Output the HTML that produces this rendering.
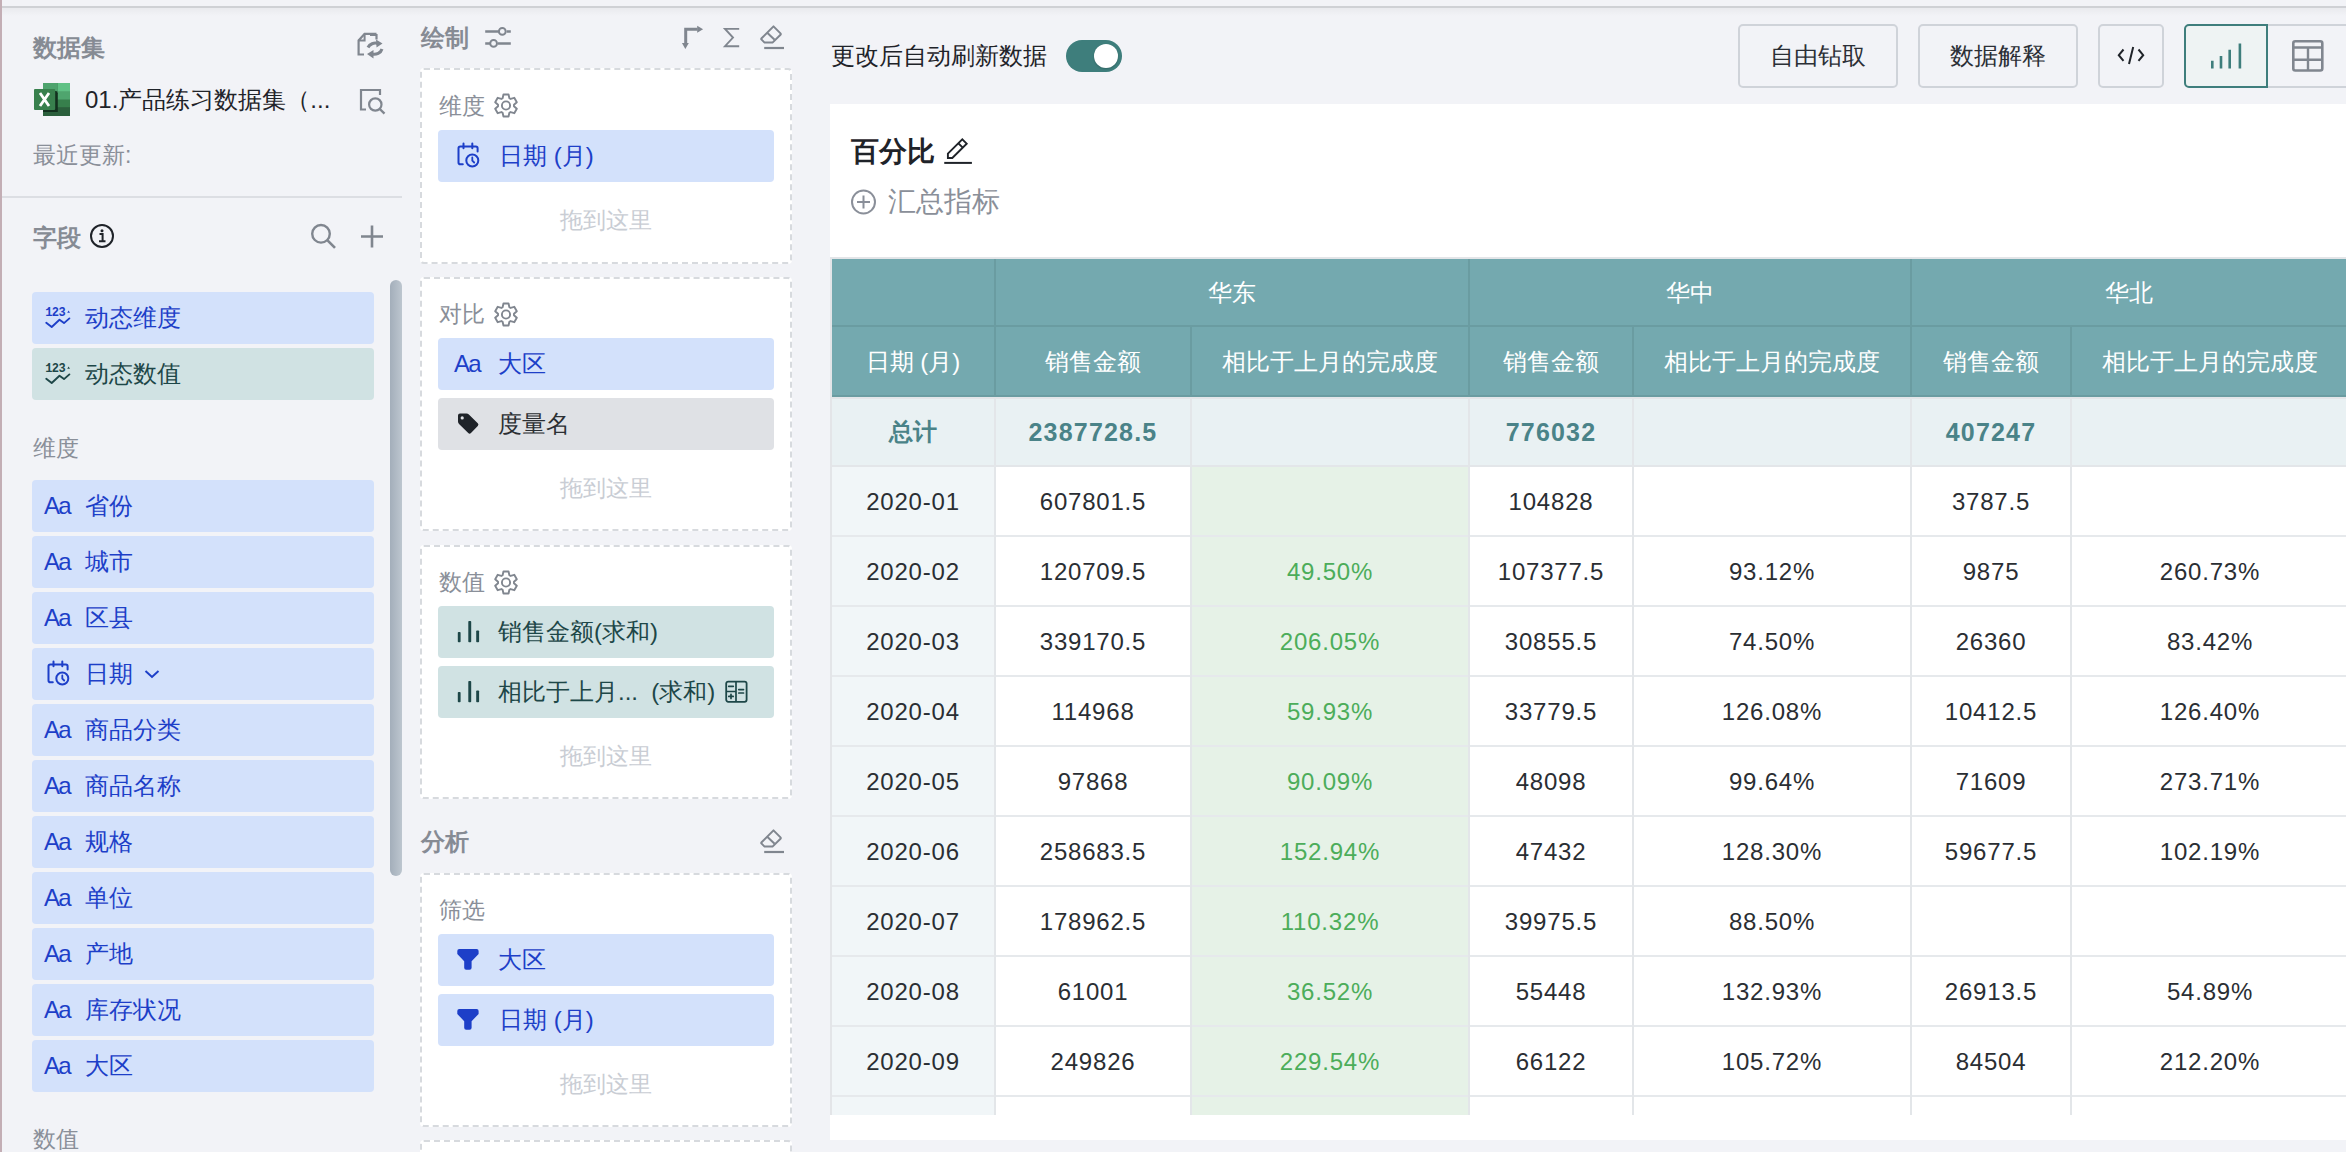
<!DOCTYPE html>
<html><head><meta charset="utf-8"><style>
html,body{margin:0;padding:0;width:2346px;height:1152px;overflow:hidden;background:#f2f3f7;}
body{position:relative;font-family:"Liberation Sans", sans-serif;}
.t{position:absolute;white-space:nowrap;}
.r{position:absolute;}
.dbox{box-sizing:border-box;background:#fff;border:2px dashed #d7dade;border-radius:4px;}
</style></head><body>
<div class="r" style="left:0px;top:0px;width:2346px;height:1152px;background:#f2f3f7;"></div>
<div class="r" style="left:0px;top:0px;width:2px;height:1152px;background:#c3aeb5;"></div>
<div class="r" style="left:2px;top:6px;width:2344px;height:2px;background:#cfd1d5;"></div>
<div class="r" style="left:2px;top:8px;width:2344px;height:8px;background:linear-gradient(rgba(0,0,0,0.035),rgba(0,0,0,0));"></div>
<div class="t " style="left:33px;top:31.200000000000003px;font-size:24px;line-height:33.599999999999994px;color:#868b94;font-weight:bold;">数据集</div>
<svg class="r" style="left:354px;top:30px;" width="32" height="34" viewBox="0 0 32 34" fill="none"><path d="M16 5 H22.5 V9.5 M10 24.5 H4.6 V10.5 L10.6 3.8 H22.5" stroke="#80868f" stroke-width="2.2" fill="none"/><path d="M4.6 10.5 H10.6 V3.8" stroke="#80868f" stroke-width="2" fill="none"/><path d="M14 17.5 A8 7 0 0 1 24 13.5" stroke="#80868f" stroke-width="3" fill="none"/><path d="M22 9.5 L28.5 13.5 L22.5 17.5 Z" fill="#80868f"/><path d="M28 19 A8 7 0 0 1 18 24" stroke="#80868f" stroke-width="3" fill="none"/><path d="M19.5 20 L13 24 L19.5 28.5 Z" fill="#80868f"/></svg>
<svg class="r" style="left:33px;top:82px;" width="38" height="35" viewBox="0 0 38 35" fill="none"><rect x="10" y="1" width="27" height="33" fill="#2b5f3c"/><rect x="10" y="1" width="14.8" height="8.8" fill="#4ea36d"/><rect x="24.8" y="1" width="12.2" height="8.8" fill="#60c185"/><rect x="10" y="9.8" width="27" height="8" fill="#4fa56e"/><rect x="10" y="17.8" width="27" height="7.4" fill="#377f4c"/><path d="M10 9 H22.6 Q24.8 9 24.8 11.2 V30 H10 Z" fill="#12301e"/><rect x="1" y="7" width="21.2" height="21" rx="1" fill="#38804d"/><path d="M7 11 L16 24 M16 11 L7 24" stroke="#fff" stroke-width="2.8"/></svg>
<div class="t " style="left:85px;top:83.2px;font-size:24px;line-height:33.599999999999994px;color:#1f2329;font-weight:normal;">01.产品练习数据集（...</div>
<svg class="r" style="left:356px;top:85px;" width="32" height="32" viewBox="0 0 32 32" fill="none"><path d="M10 24.5 H5 V5 H24 V10" stroke="#80868f" stroke-width="2.2" fill="none"/><circle cx="19.3" cy="19.5" r="6.2" stroke="#80868f" stroke-width="2.2"/><path d="M23.8 24 L28.5 28.6" stroke="#80868f" stroke-width="2.4"/></svg>
<div class="t " style="left:33px;top:138.9px;font-size:23px;line-height:32.199999999999996px;color:#8a8f99;font-weight:normal;">最近更新:</div>
<div class="r" style="left:2px;top:196px;width:400px;height:2px;background:#dcdee3;"></div>
<div class="t " style="left:33px;top:221.2px;font-size:24px;line-height:33.599999999999994px;color:#868b94;font-weight:bold;">字段</div>
<svg class="r" style="left:88px;top:222px;" width="28" height="28" viewBox="0 0 28 28" fill="none"><circle cx="14" cy="14" r="11" stroke="#1f2329" stroke-width="2"/><circle cx="14" cy="8.8" r="1.5" fill="#1f2329"/><path d="M11.5 12 H14.6 V19 M11 19.3 H17.5" stroke="#1f2329" stroke-width="2"/></svg>
<svg class="r" style="left:306px;top:218px;" width="34" height="34" viewBox="0 0 34 34" fill="none"><circle cx="15" cy="15.8" r="8.8" stroke="#80868f" stroke-width="2.4"/><path d="M21.5 22.3 L29 29.8" stroke="#80868f" stroke-width="2.6"/></svg>
<svg class="r" style="left:356px;top:220px;" width="32" height="32" viewBox="0 0 32 32" fill="none"><path d="M16 5.4 V27.5 M5 16.5 H27" stroke="#80868f" stroke-width="2.6"/></svg>
<div class="r" style="left:390px;top:280px;width:12px;height:596px;background:linear-gradient(90deg,#a3aeba,#bdc6cf);border-radius:6px;"></div>
<div class="r" style="left:32px;top:292px;width:342px;height:52px;background:#d3e1fb;border-radius:4px;"></div>
<svg class="r" style="left:44px;top:306px" width="28" height="24" viewBox="0 0 28 24" fill="none"><text x="1.2" y="9.6" font-family="Liberation Mono" font-weight="bold" font-size="12" fill="#1d3fc8" letter-spacing="-0.6">123</text><path d="M23.2 6.8 L26 6.8 L24.6 4.6 Z" fill="#1d3fc8"/><path d="M2.25 16.8 L7.7 21 L15.5 13.8 L20 17.1 L25.4 12.4" stroke="#1d3fc8" stroke-width="1.9" fill="none" stroke-linejoin="round" stroke-linecap="round"/></svg>
<div class="t " style="left:85px;top:301.2px;font-size:24px;line-height:33.599999999999994px;color:#1d3fc8;font-weight:normal;">动态维度</div>
<div class="r" style="left:32px;top:348px;width:342px;height:52px;background:#d0e2e3;border-radius:4px;"></div>
<svg class="r" style="left:44px;top:362px" width="28" height="24" viewBox="0 0 28 24" fill="none"><text x="1.2" y="9.6" font-family="Liberation Mono" font-weight="bold" font-size="12" fill="#1d4748" letter-spacing="-0.6">123</text><path d="M23.2 6.8 L26 6.8 L24.6 4.6 Z" fill="#1d4748"/><path d="M2.25 16.8 L7.7 21 L15.5 13.8 L20 17.1 L25.4 12.4" stroke="#1d4748" stroke-width="1.9" fill="none" stroke-linejoin="round" stroke-linecap="round"/></svg>
<div class="t " style="left:85px;top:357.2px;font-size:24px;line-height:33.599999999999994px;color:#1d4748;font-weight:normal;">动态数值</div>
<div class="t " style="left:33px;top:431.9px;font-size:23px;line-height:32.199999999999996px;color:#8a8f99;font-weight:normal;">维度</div>
<div class="r" style="left:32px;top:480px;width:342px;height:52px;background:#d3e1fb;border-radius:4px;"></div>
<div class="t" style="left:44px;top:491px;font-size:24px;line-height:30px;color:#1d3fc8;letter-spacing:-1.8px;">Aa</div>
<div class="t " style="left:85px;top:489.2px;font-size:24px;line-height:33.599999999999994px;color:#1d3fc8;font-weight:normal;">省份</div>
<div class="r" style="left:32px;top:536px;width:342px;height:52px;background:#d3e1fb;border-radius:4px;"></div>
<div class="t" style="left:44px;top:547px;font-size:24px;line-height:30px;color:#1d3fc8;letter-spacing:-1.8px;">Aa</div>
<div class="t " style="left:85px;top:545.2px;font-size:24px;line-height:33.599999999999994px;color:#1d3fc8;font-weight:normal;">城市</div>
<div class="r" style="left:32px;top:592px;width:342px;height:52px;background:#d3e1fb;border-radius:4px;"></div>
<div class="t" style="left:44px;top:603px;font-size:24px;line-height:30px;color:#1d3fc8;letter-spacing:-1.8px;">Aa</div>
<div class="t " style="left:85px;top:601.2px;font-size:24px;line-height:33.599999999999994px;color:#1d3fc8;font-weight:normal;">区县</div>
<div class="r" style="left:32px;top:648px;width:342px;height:52px;background:#d3e1fb;border-radius:4px;"></div>
<svg class="r" style="left:45px;top:660px" width="26" height="26" viewBox="0 0 26 26" fill="none"><path d="M7.8 22.2 H5.3 Q3.5 22.2 3.5 20.4 V6.2 Q3.5 4.4 5.3 4.4 H20.8 Q22.6 4.4 22.6 6.2 V9.6" stroke="#1d3fc8" stroke-width="2" fill="none" stroke-linecap="round"/><path d="M8.5 1.5 V6.3 M17.3 1.5 V6.3" stroke="#1d3fc8" stroke-width="2" stroke-linecap="round"/><circle cx="17.3" cy="18.5" r="6" stroke="#1d3fc8" stroke-width="2"/><path d="M17.3 15.5 V18.6 L19.2 20.5" stroke="#1d3fc8" stroke-width="1.8" fill="none" stroke-linecap="round"/></svg>
<div class="t " style="left:85px;top:657.2px;font-size:24px;line-height:33.599999999999994px;color:#1d3fc8;font-weight:normal;">日期</div>
<svg class="r" style="left:143px;top:666px;" width="18" height="16" viewBox="0 0 18 16" fill="none"><path d="M2.5 5 L9 11 L15.5 5" stroke="#1d3fc8" stroke-width="2" fill="none"/></svg>
<div class="r" style="left:32px;top:704px;width:342px;height:52px;background:#d3e1fb;border-radius:4px;"></div>
<div class="t" style="left:44px;top:715px;font-size:24px;line-height:30px;color:#1d3fc8;letter-spacing:-1.8px;">Aa</div>
<div class="t " style="left:85px;top:713.2px;font-size:24px;line-height:33.599999999999994px;color:#1d3fc8;font-weight:normal;">商品分类</div>
<div class="r" style="left:32px;top:760px;width:342px;height:52px;background:#d3e1fb;border-radius:4px;"></div>
<div class="t" style="left:44px;top:771px;font-size:24px;line-height:30px;color:#1d3fc8;letter-spacing:-1.8px;">Aa</div>
<div class="t " style="left:85px;top:769.2px;font-size:24px;line-height:33.599999999999994px;color:#1d3fc8;font-weight:normal;">商品名称</div>
<div class="r" style="left:32px;top:816px;width:342px;height:52px;background:#d3e1fb;border-radius:4px;"></div>
<div class="t" style="left:44px;top:827px;font-size:24px;line-height:30px;color:#1d3fc8;letter-spacing:-1.8px;">Aa</div>
<div class="t " style="left:85px;top:825.2px;font-size:24px;line-height:33.599999999999994px;color:#1d3fc8;font-weight:normal;">规格</div>
<div class="r" style="left:32px;top:872px;width:342px;height:52px;background:#d3e1fb;border-radius:4px;"></div>
<div class="t" style="left:44px;top:883px;font-size:24px;line-height:30px;color:#1d3fc8;letter-spacing:-1.8px;">Aa</div>
<div class="t " style="left:85px;top:881.2px;font-size:24px;line-height:33.599999999999994px;color:#1d3fc8;font-weight:normal;">单位</div>
<div class="r" style="left:32px;top:928px;width:342px;height:52px;background:#d3e1fb;border-radius:4px;"></div>
<div class="t" style="left:44px;top:939px;font-size:24px;line-height:30px;color:#1d3fc8;letter-spacing:-1.8px;">Aa</div>
<div class="t " style="left:85px;top:937.2px;font-size:24px;line-height:33.599999999999994px;color:#1d3fc8;font-weight:normal;">产地</div>
<div class="r" style="left:32px;top:984px;width:342px;height:52px;background:#d3e1fb;border-radius:4px;"></div>
<div class="t" style="left:44px;top:995px;font-size:24px;line-height:30px;color:#1d3fc8;letter-spacing:-1.8px;">Aa</div>
<div class="t " style="left:85px;top:993.2px;font-size:24px;line-height:33.599999999999994px;color:#1d3fc8;font-weight:normal;">库存状况</div>
<div class="r" style="left:32px;top:1040px;width:342px;height:52px;background:#d3e1fb;border-radius:4px;"></div>
<div class="t" style="left:44px;top:1051px;font-size:24px;line-height:30px;color:#1d3fc8;letter-spacing:-1.8px;">Aa</div>
<div class="t " style="left:85px;top:1049.2px;font-size:24px;line-height:33.599999999999994px;color:#1d3fc8;font-weight:normal;">大区</div>
<div class="t " style="left:33px;top:1122.9px;font-size:23px;line-height:32.199999999999996px;color:#8a8f99;font-weight:normal;">数值</div>
<div class="t " style="left:421px;top:21.200000000000003px;font-size:24px;line-height:33.599999999999994px;color:#868b94;font-weight:bold;">绘制</div>
<svg class="r" style="left:482px;top:24px;" width="32" height="28" viewBox="0 0 32 28" fill="none"><path d="M3.2 7.4 H16.9 M24.7 7.4 H28.8 M3.2 19.4 H8.2 M16 19.4 H28.8" stroke="#80868f" stroke-width="2.5"/><circle cx="20.3" cy="7.4" r="3.4" stroke="#80868f" stroke-width="2"/><circle cx="11.6" cy="19.4" r="3.4" stroke="#80868f" stroke-width="2"/></svg>
<svg class="r" style="left:678px;top:22px;" width="30" height="30" viewBox="0 0 30 30" fill="none"><path d="M7.7 22 V7.2 H19.5" stroke="#80868f" stroke-width="3" fill="none"/><path d="M19.2 3.8 L25.1 7.25 L19.2 10.7 Z" fill="#80868f"/><path d="M3.9 21.1 L10.8 21.1 L7.35 27 Z" fill="#80868f"/></svg>
<svg class="r" style="left:720px;top:24px;" width="24" height="28" viewBox="0 0 24 28" fill="none"><path d="M19.2 4.9 H5 L13 13.6 L5 22.2 H19.2" stroke="#80868f" stroke-width="1.9" fill="none"/></svg>
<svg class="r" style="left:756px;top:22px;" width="32" height="30" viewBox="0 0 32 30" fill="none"><path d="M17.5 4.4 L24.5 11.4 Q25.2 12.1 24.5 12.8 L16.5 20.6 H8.6 L5.6 17.6 Q4.9 16.9 5.6 16.2 Z" stroke="#80868f" stroke-width="2" fill="none" stroke-linejoin="round"/><path d="M11.2 10.8 L18.6 17.8" stroke="#80868f" stroke-width="2"/><path d="M8.2 26 H28" stroke="#80868f" stroke-width="2.2"/></svg>
<div class="r dbox" style="left:420px;top:68px;width:372px;height:196px;"></div>
<div class="t " style="left:439px;top:89.9px;font-size:23px;line-height:32.199999999999996px;color:#8a8f99;font-weight:normal;">维度</div>
<svg class="r" style="left:493px;top:92px" width="26" height="26" viewBox="0 0 26 26" fill="none"><path d="M9.62 6.25 L10.46 2.49 L15.54 2.49 L16.38 6.25 L17.59 6.95 L21.26 5.79 L23.81 10.20 L20.97 12.80 L20.97 14.20 L23.81 16.80 L21.26 21.21 L17.59 20.05 L16.38 20.75 L15.54 24.51 L10.46 24.51 L9.62 20.75 L8.41 20.05 L4.74 21.21 L2.19 16.80 L5.03 14.20 L5.03 12.80 L2.19 10.20 L4.74 5.79 L8.41 6.95 Z" stroke="#80868f" stroke-width="1.9" stroke-linejoin="round" fill="none"/><circle cx="13" cy="13.5" r="4.1" stroke="#80868f" stroke-width="1.9"/></svg>
<div class="r" style="left:438px;top:130px;width:336px;height:52px;background:#d3e1fb;border-radius:4px;"></div>
<svg class="r" style="left:455px;top:142px" width="26" height="26" viewBox="0 0 26 26" fill="none"><path d="M7.8 22.2 H5.3 Q3.5 22.2 3.5 20.4 V6.2 Q3.5 4.4 5.3 4.4 H20.8 Q22.6 4.4 22.6 6.2 V9.6" stroke="#1d3fc8" stroke-width="2" fill="none" stroke-linecap="round"/><path d="M8.5 1.5 V6.3 M17.3 1.5 V6.3" stroke="#1d3fc8" stroke-width="2" stroke-linecap="round"/><circle cx="17.3" cy="18.5" r="6" stroke="#1d3fc8" stroke-width="2"/><path d="M17.3 15.5 V18.6 L19.2 20.5" stroke="#1d3fc8" stroke-width="1.8" fill="none" stroke-linecap="round"/></svg>
<div class="t " style="left:499px;top:139.2px;font-size:24px;line-height:33.599999999999994px;color:#1d3fc8;font-weight:normal;">日期 (月)</div>
<div class="t " style="left:420px;top:203.9px;font-size:23px;line-height:32.199999999999996px;color:#c9cdd4;font-weight:normal;width:372px;text-align:center;">拖到这里</div>
<div class="r dbox" style="left:420px;top:277px;width:372px;height:254px;"></div>
<div class="t " style="left:439px;top:297.9px;font-size:23px;line-height:32.199999999999996px;color:#8a8f99;font-weight:normal;">对比</div>
<svg class="r" style="left:493px;top:301px" width="26" height="26" viewBox="0 0 26 26" fill="none"><path d="M9.62 6.25 L10.46 2.49 L15.54 2.49 L16.38 6.25 L17.59 6.95 L21.26 5.79 L23.81 10.20 L20.97 12.80 L20.97 14.20 L23.81 16.80 L21.26 21.21 L17.59 20.05 L16.38 20.75 L15.54 24.51 L10.46 24.51 L9.62 20.75 L8.41 20.05 L4.74 21.21 L2.19 16.80 L5.03 14.20 L5.03 12.80 L2.19 10.20 L4.74 5.79 L8.41 6.95 Z" stroke="#80868f" stroke-width="1.9" stroke-linejoin="round" fill="none"/><circle cx="13" cy="13.5" r="4.1" stroke="#80868f" stroke-width="1.9"/></svg>
<div class="r" style="left:438px;top:338px;width:336px;height:52px;background:#d3e1fb;border-radius:4px;"></div>
<div class="t" style="left:454px;top:349px;font-size:24px;line-height:30px;color:#1d3fc8;letter-spacing:-1.8px;">Aa</div>
<div class="t " style="left:498px;top:347.2px;font-size:24px;line-height:33.599999999999994px;color:#1d3fc8;font-weight:normal;">大区</div>
<div class="r" style="left:438px;top:398px;width:336px;height:52px;background:#dfe1e5;border-radius:4px;"></div>
<svg class="r" style="left:455px;top:411px;" width="26" height="26" viewBox="0 0 26 26" fill="none"><path d="M3.8 4.5 Q3.8 3.3 5 3.3 H11.5 Q12.5 3.3 13.3 4.1 L22.2 12.9 Q23 13.7 22.2 14.5 L15.4 21.5 Q14.6 22.3 13.8 21.5 L4.6 12.4 Q3.8 11.6 3.8 10.6 Z" fill="#1f2329" stroke="#1f2329" stroke-width="1.6" stroke-linejoin="round"/><circle cx="7.2" cy="6.9" r="1.6" fill="#dfe1e5"/></svg>
<div class="t " style="left:498px;top:407.2px;font-size:24px;line-height:33.599999999999994px;color:#2b2f33;font-weight:normal;">度量名</div>
<div class="t " style="left:420px;top:471.9px;font-size:23px;line-height:32.199999999999996px;color:#c9cdd4;font-weight:normal;width:372px;text-align:center;">拖到这里</div>
<div class="r dbox" style="left:420px;top:545px;width:372px;height:254px;"></div>
<div class="t " style="left:439px;top:565.9px;font-size:23px;line-height:32.199999999999996px;color:#8a8f99;font-weight:normal;">数值</div>
<svg class="r" style="left:493px;top:569px" width="26" height="26" viewBox="0 0 26 26" fill="none"><path d="M9.62 6.25 L10.46 2.49 L15.54 2.49 L16.38 6.25 L17.59 6.95 L21.26 5.79 L23.81 10.20 L20.97 12.80 L20.97 14.20 L23.81 16.80 L21.26 21.21 L17.59 20.05 L16.38 20.75 L15.54 24.51 L10.46 24.51 L9.62 20.75 L8.41 20.05 L4.74 21.21 L2.19 16.80 L5.03 14.20 L5.03 12.80 L2.19 10.20 L4.74 5.79 L8.41 6.95 Z" stroke="#80868f" stroke-width="1.9" stroke-linejoin="round" fill="none"/><circle cx="13" cy="13.5" r="4.1" stroke="#80868f" stroke-width="1.9"/></svg>
<div class="r" style="left:438px;top:606px;width:336px;height:52px;background:#d0e2e3;border-radius:4px;"></div>
<svg class="r" style="left:457px;top:620px" width="24" height="24" viewBox="0 0 24 24"><rect x="0.8" y="12" width="2.8" height="10.3" rx="0.8" fill="#1d4748"/><rect x="11.3" y="1" width="2.9" height="21.3" rx="0.8" fill="#1d4748"/><rect x="19.2" y="10.4" width="2.9" height="11.9" rx="0.8" fill="#1d4748"/></svg>
<div class="t " style="left:498px;top:615.2px;font-size:24px;line-height:33.599999999999994px;color:#1d4748;font-weight:normal;">销售金额(求和)</div>
<div class="r" style="left:438px;top:666px;width:336px;height:52px;background:#d0e2e3;border-radius:4px;"></div>
<svg class="r" style="left:457px;top:680px" width="24" height="24" viewBox="0 0 24 24"><rect x="0.8" y="12" width="2.8" height="10.3" rx="0.8" fill="#1d4748"/><rect x="11.3" y="1" width="2.9" height="21.3" rx="0.8" fill="#1d4748"/><rect x="19.2" y="10.4" width="2.9" height="11.9" rx="0.8" fill="#1d4748"/></svg>
<div class="t " style="left:498px;top:675.2px;font-size:24px;line-height:33.599999999999994px;color:#1d4748;font-weight:normal;">相比于上月...&nbsp;&nbsp;(求和)</div>
<svg class="r" style="left:723px;top:679px;" width="26" height="26" viewBox="0 0 26 26" fill="none"><rect x="3.2" y="2.6" width="20.4" height="20.2" rx="2" stroke="#1d4748" stroke-width="1.8"/><path d="M13 2.6 V22.8 M3.2 12.5 H13" stroke="#1d4748" stroke-width="1.7"/><path d="M5.7 7.3 H10.3 M15.8 10.6 H20.5 M15.8 14 H20.5 M8 15.3 V19.5 M5.8 17.4 H10.2" stroke="#1d4748" stroke-width="1.7" stroke-linecap="round"/></svg>
<div class="t " style="left:420px;top:739.9px;font-size:23px;line-height:32.199999999999996px;color:#c9cdd4;font-weight:normal;width:372px;text-align:center;">拖到这里</div>
<div class="t " style="left:421px;top:825.2px;font-size:24px;line-height:33.599999999999994px;color:#868b94;font-weight:bold;">分析</div>
<svg class="r" style="left:756px;top:826px;" width="32" height="30" viewBox="0 0 32 30" fill="none"><path d="M17.5 4.4 L24.5 11.4 Q25.2 12.1 24.5 12.8 L16.5 20.6 H8.6 L5.6 17.6 Q4.9 16.9 5.6 16.2 Z" stroke="#80868f" stroke-width="2" fill="none" stroke-linejoin="round"/><path d="M11.2 10.8 L18.6 17.8" stroke="#80868f" stroke-width="2"/><path d="M8.2 26 H28" stroke="#80868f" stroke-width="2.2"/></svg>
<div class="r dbox" style="left:420px;top:873px;width:372px;height:254px;"></div>
<div class="t " style="left:439px;top:893.9px;font-size:23px;line-height:32.199999999999996px;color:#8a8f99;font-weight:normal;">筛选</div>
<div class="r" style="left:438px;top:934px;width:336px;height:52px;background:#d3e1fb;border-radius:4px;"></div>
<svg class="r" style="left:455px;top:947px" width="26" height="26" viewBox="0 0 26 26"><path d="M4.3 1.9 H21.6 Q23.6 1.9 23.6 3.9 V6.9 L16.6 14.3 V20.7 Q16.6 22.7 14.6 22.7 H11.2 Q9.2 22.7 9.2 20.7 V14.3 L2.3 6.9 V3.9 Q2.3 1.9 4.3 1.9 Z" fill="#1d3fc8"/></svg>
<div class="t " style="left:498px;top:943.2px;font-size:24px;line-height:33.599999999999994px;color:#1d3fc8;font-weight:normal;">大区</div>
<div class="r" style="left:438px;top:994px;width:336px;height:52px;background:#d3e1fb;border-radius:4px;"></div>
<svg class="r" style="left:455px;top:1007px" width="26" height="26" viewBox="0 0 26 26"><path d="M4.3 1.9 H21.6 Q23.6 1.9 23.6 3.9 V6.9 L16.6 14.3 V20.7 Q16.6 22.7 14.6 22.7 H11.2 Q9.2 22.7 9.2 20.7 V14.3 L2.3 6.9 V3.9 Q2.3 1.9 4.3 1.9 Z" fill="#1d3fc8"/></svg>
<div class="t " style="left:499px;top:1003.2px;font-size:24px;line-height:33.599999999999994px;color:#1d3fc8;font-weight:normal;">日期 (月)</div>
<div class="t " style="left:420px;top:1067.9px;font-size:23px;line-height:32.199999999999996px;color:#c9cdd4;font-weight:normal;width:372px;text-align:center;">拖到这里</div>
<div class="r dbox" style="left:420px;top:1140px;width:372px;height:60px;"></div>
<div class="t " style="left:831px;top:39.2px;font-size:24px;line-height:33.599999999999994px;color:#1f2329;font-weight:normal;">更改后自动刷新数据</div>
<div class="r" style="left:1066px;top:40px;width:56px;height:32px;background:#3e7e7c;border-radius:16px;"></div>
<div class="r" style="left:1094px;top:43.8px;width:24px;height:24px;border-radius:50%;background:#fff;box-shadow:0 1px 2px rgba(0,0,0,.2)"></div>
<div class="r" style="left:1738px;top:24px;width:160px;height:64px;box-sizing:border-box;border:2px solid #cfd3d9;border-radius:5px;background:#f2f3f7;"></div>

<div class="t " style="left:1738px;top:39.2px;font-size:24px;line-height:33.599999999999994px;color:#2b2f36;font-weight:normal;width:160px;text-align:center;">自由钻取</div>
<div class="r" style="left:1918px;top:24px;width:160px;height:64px;box-sizing:border-box;border:2px solid #cfd3d9;border-radius:5px;background:#f2f3f7;"></div>

<div class="t " style="left:1918px;top:39.2px;font-size:24px;line-height:33.599999999999994px;color:#2b2f36;font-weight:normal;width:160px;text-align:center;">数据解释</div>
<div class="r" style="left:2098px;top:24px;width:66px;height:64px;box-sizing:border-box;border:2px solid #cfd3d9;border-radius:5px;background:#f2f3f7;"></div>

<svg class="r" style="left:2114px;top:42px;" width="34" height="28" viewBox="0 0 34 28" fill="none"><path d="M9.5 7.5 L4.8 13.2 L9.5 18.9 M24.5 7.5 L29.2 13.2 L24.5 18.9 M19.2 5 L15 22" stroke="#1f2329" stroke-width="2" fill="none"/></svg>
<div class="r" style="left:2266px;top:24px;width:120px;height:64px;box-sizing:border-box;border:2px solid #cfd3d9;border-left:none;border-radius:0 5px 5px 0;background:#f2f3f7;"></div>
<div class="r" style="left:2184px;top:24px;width:84px;height:64px;box-sizing:border-box;border:2px solid #3e7e7c;border-radius:5px 0 0 5px;background:#eef3f3;"></div>
<svg class="r" style="left:2208px;top:40px;" width="36" height="32" viewBox="0 0 36 32" fill="none"><path d="M4.3 20.8 V28.5 M13 16 V28.5 M21.7 9.7 V28.5 M31.9 3.4 V28.5" stroke="#3e7e7c" stroke-width="2.6"/></svg>
<svg class="r" style="left:2288px;top:36px;" width="40" height="40" viewBox="0 0 40 40" fill="none"><rect x="5.3" y="5.2" width="29" height="29.3" rx="2" stroke="#80868f" stroke-width="2.6"/><path d="M5.3 11.5 H34.3 M5.3 23.8 H34.3 M20 11.5 V34.5" stroke="#80868f" stroke-width="2.4"/></svg>
<div class="r" style="left:830px;top:104px;width:1516px;height:1036px;background:#ffffff;"></div>
<div class="t " style="left:851px;top:132.4px;font-size:28px;line-height:39.199999999999996px;color:#1f2329;font-weight:bold;">百分比</div>
<svg class="r" style="left:942px;top:136px;" width="32" height="30" viewBox="0 0 32 30" fill="none"><path d="M5.9 22 V17.6 L20.3 3.3 L24.7 7.7 L10.3 22 Z" stroke="#1f2329" stroke-width="1.9" fill="none" stroke-linejoin="miter"/><path d="M16.3 7.2 L20.8 11.6" stroke="#1f2329" stroke-width="1.9"/><path d="M2.25 26.9 H29.9" stroke="#1f2329" stroke-width="2"/></svg>
<svg class="r" style="left:849px;top:187px;" width="30" height="30" viewBox="0 0 30 30" fill="none"><circle cx="14.5" cy="15" r="11.5" stroke="#8a8f99" stroke-width="2"/><path d="M14.5 8.5 V21.5 M8 15 H21" stroke="#8a8f99" stroke-width="2"/></svg>
<div class="t " style="left:888px;top:182.75px;font-size:27.5px;line-height:38.5px;color:#8a8f99;font-weight:normal;">汇总指标</div>
<div class="r" style="left:830px;top:257px;width:1516px;height:2px;background:#e3e5e8;"></div>
<div class="r" style="left:830px;top:257px;width:2px;height:860px;background:#e3e5e8;"></div>
<div class="r" style="left:832px;top:259px;width:1514px;height:138px;background:#74a9af;"></div>
<div class="r" style="left:832px;top:325px;width:1514px;height:2px;background:#6a9ca1;"></div>
<div class="r" style="left:832px;top:395px;width:1514px;height:2px;background:#6a9ca1;"></div>
<div class="r" style="left:994px;top:259px;width:2px;height:138px;background:#6a9ca1;"></div>
<div class="r" style="left:1468px;top:259px;width:2px;height:138px;background:#6a9ca1;"></div>
<div class="r" style="left:1910px;top:259px;width:2px;height:138px;background:#6a9ca1;"></div>
<div class="r" style="left:1190px;top:327px;width:2px;height:70px;background:#6a9ca1;"></div>
<div class="r" style="left:1632px;top:327px;width:2px;height:70px;background:#6a9ca1;"></div>
<div class="r" style="left:2070px;top:327px;width:2px;height:70px;background:#6a9ca1;"></div>
<div class="t " style="left:996px;top:276.2px;font-size:24px;line-height:33.599999999999994px;color:#fff;font-weight:normal;width:472px;text-align:center;">华东</div>
<div class="t " style="left:1470px;top:276.2px;font-size:24px;line-height:33.599999999999994px;color:#fff;font-weight:normal;width:440px;text-align:center;">华中</div>
<div class="t " style="left:1912px;top:276.2px;font-size:24px;line-height:33.599999999999994px;color:#fff;font-weight:normal;width:434px;text-align:center;">华北</div>
<div class="t " style="left:832px;top:345.2px;font-size:24px;line-height:33.599999999999994px;color:#fff;font-weight:normal;width:162px;text-align:center;">日期 (月)</div>
<div class="t " style="left:996px;top:345.2px;font-size:24px;line-height:33.599999999999994px;color:#fff;font-weight:normal;width:194px;text-align:center;">销售金额</div>
<div class="t " style="left:1192px;top:345.2px;font-size:24px;line-height:33.599999999999994px;color:#fff;font-weight:normal;width:276px;text-align:center;">相比于上月的完成度</div>
<div class="t " style="left:1470px;top:345.2px;font-size:24px;line-height:33.599999999999994px;color:#fff;font-weight:normal;width:162px;text-align:center;">销售金额</div>
<div class="t " style="left:1634px;top:345.2px;font-size:24px;line-height:33.599999999999994px;color:#fff;font-weight:normal;width:276px;text-align:center;">相比于上月的完成度</div>
<div class="t " style="left:1912px;top:345.2px;font-size:24px;line-height:33.599999999999994px;color:#fff;font-weight:normal;width:158px;text-align:center;">销售金额</div>
<div class="t " style="left:2072px;top:345.2px;font-size:24px;line-height:33.599999999999994px;color:#fff;font-weight:normal;width:276px;text-align:center;">相比于上月的完成度</div>
<div class="r" style="left:832px;top:397px;width:1514px;height:70px;background:#e9f1f3;"></div>
<div class="r" style="left:832px;top:397px;width:1514px;height:2px;background:#e3e6e9;"></div>
<div class="r" style="left:832px;top:465px;width:1514px;height:2px;background:#e3e6e9;"></div>
<div class="r" style="left:832px;top:467px;width:162px;height:68px;background:#f1f6f8;"></div>
<div class="r" style="left:1192px;top:467px;width:276px;height:68px;background:#e6f2e7;"></div>
<div class="r" style="left:832px;top:535px;width:1514px;height:2px;background:#e6e9ec;"></div>
<div class="r" style="left:832px;top:537px;width:162px;height:68px;background:#f1f6f8;"></div>
<div class="r" style="left:1192px;top:537px;width:276px;height:68px;background:#e6f2e7;"></div>
<div class="r" style="left:832px;top:605px;width:1514px;height:2px;background:#e6e9ec;"></div>
<div class="r" style="left:832px;top:607px;width:162px;height:68px;background:#f1f6f8;"></div>
<div class="r" style="left:1192px;top:607px;width:276px;height:68px;background:#e6f2e7;"></div>
<div class="r" style="left:832px;top:675px;width:1514px;height:2px;background:#e6e9ec;"></div>
<div class="r" style="left:832px;top:677px;width:162px;height:68px;background:#f1f6f8;"></div>
<div class="r" style="left:1192px;top:677px;width:276px;height:68px;background:#e6f2e7;"></div>
<div class="r" style="left:832px;top:745px;width:1514px;height:2px;background:#e6e9ec;"></div>
<div class="r" style="left:832px;top:747px;width:162px;height:68px;background:#f1f6f8;"></div>
<div class="r" style="left:1192px;top:747px;width:276px;height:68px;background:#e6f2e7;"></div>
<div class="r" style="left:832px;top:815px;width:1514px;height:2px;background:#e6e9ec;"></div>
<div class="r" style="left:832px;top:817px;width:162px;height:68px;background:#f1f6f8;"></div>
<div class="r" style="left:1192px;top:817px;width:276px;height:68px;background:#e6f2e7;"></div>
<div class="r" style="left:832px;top:885px;width:1514px;height:2px;background:#e6e9ec;"></div>
<div class="r" style="left:832px;top:887px;width:162px;height:68px;background:#f1f6f8;"></div>
<div class="r" style="left:1192px;top:887px;width:276px;height:68px;background:#e6f2e7;"></div>
<div class="r" style="left:832px;top:955px;width:1514px;height:2px;background:#e6e9ec;"></div>
<div class="r" style="left:832px;top:957px;width:162px;height:68px;background:#f1f6f8;"></div>
<div class="r" style="left:1192px;top:957px;width:276px;height:68px;background:#e6f2e7;"></div>
<div class="r" style="left:832px;top:1025px;width:1514px;height:2px;background:#e6e9ec;"></div>
<div class="r" style="left:832px;top:1027px;width:162px;height:68px;background:#f1f6f8;"></div>
<div class="r" style="left:1192px;top:1027px;width:276px;height:68px;background:#e6f2e7;"></div>
<div class="r" style="left:832px;top:1095px;width:1514px;height:2px;background:#e6e9ec;"></div>
<div class="r" style="left:832px;top:1097px;width:162px;height:18px;background:#f1f6f8;"></div>
<div class="r" style="left:1192px;top:1097px;width:276px;height:18px;background:#e6f2e7;"></div>
<div class="r" style="left:994px;top:397px;width:2px;height:718px;background:#e3e6e9;"></div>
<div class="r" style="left:1190px;top:397px;width:2px;height:718px;background:#e3e6e9;"></div>
<div class="r" style="left:1468px;top:397px;width:2px;height:718px;background:#e3e6e9;"></div>
<div class="r" style="left:1632px;top:397px;width:2px;height:718px;background:#e3e6e9;"></div>
<div class="r" style="left:1910px;top:397px;width:2px;height:718px;background:#e3e6e9;"></div>
<div class="r" style="left:2070px;top:397px;width:2px;height:718px;background:#e3e6e9;"></div>
<div class="t " style="left:832px;top:415.2px;font-size:24px;line-height:33.599999999999994px;color:#4a8388;font-weight:bold;width:162px;text-align:center;">总计</div>
<div class="t " style="left:996px;top:414.5px;font-size:25px;line-height:35.0px;color:#4a8388;font-weight:bold;width:194px;text-align:center;letter-spacing:1.2px;">2387728.5</div>
<div class="t " style="left:1470px;top:414.5px;font-size:25px;line-height:35.0px;color:#4a8388;font-weight:bold;width:162px;text-align:center;letter-spacing:1.2px;">776032</div>
<div class="t " style="left:1912px;top:414.5px;font-size:25px;line-height:35.0px;color:#4a8388;font-weight:bold;width:158px;text-align:center;letter-spacing:1.2px;">407247</div>
<div class="t " style="left:832px;top:485.2px;font-size:24px;line-height:33.599999999999994px;color:#2a2e33;font-weight:normal;width:162px;text-align:center;letter-spacing:0.8px;">2020-01</div>
<div class="t " style="left:996px;top:485.2px;font-size:24px;line-height:33.599999999999994px;color:#2a2e33;font-weight:normal;width:194px;text-align:center;letter-spacing:0.8px;">607801.5</div>
<div class="t " style="left:1470px;top:485.2px;font-size:24px;line-height:33.599999999999994px;color:#2a2e33;font-weight:normal;width:162px;text-align:center;letter-spacing:0.8px;">104828</div>
<div class="t " style="left:1912px;top:485.2px;font-size:24px;line-height:33.599999999999994px;color:#2a2e33;font-weight:normal;width:158px;text-align:center;letter-spacing:0.8px;">3787.5</div>
<div class="t " style="left:832px;top:555.2px;font-size:24px;line-height:33.599999999999994px;color:#2a2e33;font-weight:normal;width:162px;text-align:center;letter-spacing:0.8px;">2020-02</div>
<div class="t " style="left:996px;top:555.2px;font-size:24px;line-height:33.599999999999994px;color:#2a2e33;font-weight:normal;width:194px;text-align:center;letter-spacing:0.8px;">120709.5</div>
<div class="t " style="left:1192px;top:555.2px;font-size:24px;line-height:33.599999999999994px;color:#4cad5a;font-weight:normal;width:276px;text-align:center;letter-spacing:0.8px;">49.50%</div>
<div class="t " style="left:1470px;top:555.2px;font-size:24px;line-height:33.599999999999994px;color:#2a2e33;font-weight:normal;width:162px;text-align:center;letter-spacing:0.8px;">107377.5</div>
<div class="t " style="left:1634px;top:555.2px;font-size:24px;line-height:33.599999999999994px;color:#2a2e33;font-weight:normal;width:276px;text-align:center;letter-spacing:0.8px;">93.12%</div>
<div class="t " style="left:1912px;top:555.2px;font-size:24px;line-height:33.599999999999994px;color:#2a2e33;font-weight:normal;width:158px;text-align:center;letter-spacing:0.8px;">9875</div>
<div class="t " style="left:2072px;top:555.2px;font-size:24px;line-height:33.599999999999994px;color:#2a2e33;font-weight:normal;width:276px;text-align:center;letter-spacing:0.8px;">260.73%</div>
<div class="t " style="left:832px;top:625.2px;font-size:24px;line-height:33.599999999999994px;color:#2a2e33;font-weight:normal;width:162px;text-align:center;letter-spacing:0.8px;">2020-03</div>
<div class="t " style="left:996px;top:625.2px;font-size:24px;line-height:33.599999999999994px;color:#2a2e33;font-weight:normal;width:194px;text-align:center;letter-spacing:0.8px;">339170.5</div>
<div class="t " style="left:1192px;top:625.2px;font-size:24px;line-height:33.599999999999994px;color:#4cad5a;font-weight:normal;width:276px;text-align:center;letter-spacing:0.8px;">206.05%</div>
<div class="t " style="left:1470px;top:625.2px;font-size:24px;line-height:33.599999999999994px;color:#2a2e33;font-weight:normal;width:162px;text-align:center;letter-spacing:0.8px;">30855.5</div>
<div class="t " style="left:1634px;top:625.2px;font-size:24px;line-height:33.599999999999994px;color:#2a2e33;font-weight:normal;width:276px;text-align:center;letter-spacing:0.8px;">74.50%</div>
<div class="t " style="left:1912px;top:625.2px;font-size:24px;line-height:33.599999999999994px;color:#2a2e33;font-weight:normal;width:158px;text-align:center;letter-spacing:0.8px;">26360</div>
<div class="t " style="left:2072px;top:625.2px;font-size:24px;line-height:33.599999999999994px;color:#2a2e33;font-weight:normal;width:276px;text-align:center;letter-spacing:0.8px;">83.42%</div>
<div class="t " style="left:832px;top:695.2px;font-size:24px;line-height:33.599999999999994px;color:#2a2e33;font-weight:normal;width:162px;text-align:center;letter-spacing:0.8px;">2020-04</div>
<div class="t " style="left:996px;top:695.2px;font-size:24px;line-height:33.599999999999994px;color:#2a2e33;font-weight:normal;width:194px;text-align:center;letter-spacing:0.8px;">114968</div>
<div class="t " style="left:1192px;top:695.2px;font-size:24px;line-height:33.599999999999994px;color:#4cad5a;font-weight:normal;width:276px;text-align:center;letter-spacing:0.8px;">59.93%</div>
<div class="t " style="left:1470px;top:695.2px;font-size:24px;line-height:33.599999999999994px;color:#2a2e33;font-weight:normal;width:162px;text-align:center;letter-spacing:0.8px;">33779.5</div>
<div class="t " style="left:1634px;top:695.2px;font-size:24px;line-height:33.599999999999994px;color:#2a2e33;font-weight:normal;width:276px;text-align:center;letter-spacing:0.8px;">126.08%</div>
<div class="t " style="left:1912px;top:695.2px;font-size:24px;line-height:33.599999999999994px;color:#2a2e33;font-weight:normal;width:158px;text-align:center;letter-spacing:0.8px;">10412.5</div>
<div class="t " style="left:2072px;top:695.2px;font-size:24px;line-height:33.599999999999994px;color:#2a2e33;font-weight:normal;width:276px;text-align:center;letter-spacing:0.8px;">126.40%</div>
<div class="t " style="left:832px;top:765.2px;font-size:24px;line-height:33.599999999999994px;color:#2a2e33;font-weight:normal;width:162px;text-align:center;letter-spacing:0.8px;">2020-05</div>
<div class="t " style="left:996px;top:765.2px;font-size:24px;line-height:33.599999999999994px;color:#2a2e33;font-weight:normal;width:194px;text-align:center;letter-spacing:0.8px;">97868</div>
<div class="t " style="left:1192px;top:765.2px;font-size:24px;line-height:33.599999999999994px;color:#4cad5a;font-weight:normal;width:276px;text-align:center;letter-spacing:0.8px;">90.09%</div>
<div class="t " style="left:1470px;top:765.2px;font-size:24px;line-height:33.599999999999994px;color:#2a2e33;font-weight:normal;width:162px;text-align:center;letter-spacing:0.8px;">48098</div>
<div class="t " style="left:1634px;top:765.2px;font-size:24px;line-height:33.599999999999994px;color:#2a2e33;font-weight:normal;width:276px;text-align:center;letter-spacing:0.8px;">99.64%</div>
<div class="t " style="left:1912px;top:765.2px;font-size:24px;line-height:33.599999999999994px;color:#2a2e33;font-weight:normal;width:158px;text-align:center;letter-spacing:0.8px;">71609</div>
<div class="t " style="left:2072px;top:765.2px;font-size:24px;line-height:33.599999999999994px;color:#2a2e33;font-weight:normal;width:276px;text-align:center;letter-spacing:0.8px;">273.71%</div>
<div class="t " style="left:832px;top:835.2px;font-size:24px;line-height:33.599999999999994px;color:#2a2e33;font-weight:normal;width:162px;text-align:center;letter-spacing:0.8px;">2020-06</div>
<div class="t " style="left:996px;top:835.2px;font-size:24px;line-height:33.599999999999994px;color:#2a2e33;font-weight:normal;width:194px;text-align:center;letter-spacing:0.8px;">258683.5</div>
<div class="t " style="left:1192px;top:835.2px;font-size:24px;line-height:33.599999999999994px;color:#4cad5a;font-weight:normal;width:276px;text-align:center;letter-spacing:0.8px;">152.94%</div>
<div class="t " style="left:1470px;top:835.2px;font-size:24px;line-height:33.599999999999994px;color:#2a2e33;font-weight:normal;width:162px;text-align:center;letter-spacing:0.8px;">47432</div>
<div class="t " style="left:1634px;top:835.2px;font-size:24px;line-height:33.599999999999994px;color:#2a2e33;font-weight:normal;width:276px;text-align:center;letter-spacing:0.8px;">128.30%</div>
<div class="t " style="left:1912px;top:835.2px;font-size:24px;line-height:33.599999999999994px;color:#2a2e33;font-weight:normal;width:158px;text-align:center;letter-spacing:0.8px;">59677.5</div>
<div class="t " style="left:2072px;top:835.2px;font-size:24px;line-height:33.599999999999994px;color:#2a2e33;font-weight:normal;width:276px;text-align:center;letter-spacing:0.8px;">102.19%</div>
<div class="t " style="left:832px;top:905.2px;font-size:24px;line-height:33.599999999999994px;color:#2a2e33;font-weight:normal;width:162px;text-align:center;letter-spacing:0.8px;">2020-07</div>
<div class="t " style="left:996px;top:905.2px;font-size:24px;line-height:33.599999999999994px;color:#2a2e33;font-weight:normal;width:194px;text-align:center;letter-spacing:0.8px;">178962.5</div>
<div class="t " style="left:1192px;top:905.2px;font-size:24px;line-height:33.599999999999994px;color:#4cad5a;font-weight:normal;width:276px;text-align:center;letter-spacing:0.8px;">110.32%</div>
<div class="t " style="left:1470px;top:905.2px;font-size:24px;line-height:33.599999999999994px;color:#2a2e33;font-weight:normal;width:162px;text-align:center;letter-spacing:0.8px;">39975.5</div>
<div class="t " style="left:1634px;top:905.2px;font-size:24px;line-height:33.599999999999994px;color:#2a2e33;font-weight:normal;width:276px;text-align:center;letter-spacing:0.8px;">88.50%</div>
<div class="t " style="left:832px;top:975.2px;font-size:24px;line-height:33.599999999999994px;color:#2a2e33;font-weight:normal;width:162px;text-align:center;letter-spacing:0.8px;">2020-08</div>
<div class="t " style="left:996px;top:975.2px;font-size:24px;line-height:33.599999999999994px;color:#2a2e33;font-weight:normal;width:194px;text-align:center;letter-spacing:0.8px;">61001</div>
<div class="t " style="left:1192px;top:975.2px;font-size:24px;line-height:33.599999999999994px;color:#4cad5a;font-weight:normal;width:276px;text-align:center;letter-spacing:0.8px;">36.52%</div>
<div class="t " style="left:1470px;top:975.2px;font-size:24px;line-height:33.599999999999994px;color:#2a2e33;font-weight:normal;width:162px;text-align:center;letter-spacing:0.8px;">55448</div>
<div class="t " style="left:1634px;top:975.2px;font-size:24px;line-height:33.599999999999994px;color:#2a2e33;font-weight:normal;width:276px;text-align:center;letter-spacing:0.8px;">132.93%</div>
<div class="t " style="left:1912px;top:975.2px;font-size:24px;line-height:33.599999999999994px;color:#2a2e33;font-weight:normal;width:158px;text-align:center;letter-spacing:0.8px;">26913.5</div>
<div class="t " style="left:2072px;top:975.2px;font-size:24px;line-height:33.599999999999994px;color:#2a2e33;font-weight:normal;width:276px;text-align:center;letter-spacing:0.8px;">54.89%</div>
<div class="t " style="left:832px;top:1045.2px;font-size:24px;line-height:33.599999999999994px;color:#2a2e33;font-weight:normal;width:162px;text-align:center;letter-spacing:0.8px;">2020-09</div>
<div class="t " style="left:996px;top:1045.2px;font-size:24px;line-height:33.599999999999994px;color:#2a2e33;font-weight:normal;width:194px;text-align:center;letter-spacing:0.8px;">249826</div>
<div class="t " style="left:1192px;top:1045.2px;font-size:24px;line-height:33.599999999999994px;color:#4cad5a;font-weight:normal;width:276px;text-align:center;letter-spacing:0.8px;">229.54%</div>
<div class="t " style="left:1470px;top:1045.2px;font-size:24px;line-height:33.599999999999994px;color:#2a2e33;font-weight:normal;width:162px;text-align:center;letter-spacing:0.8px;">66122</div>
<div class="t " style="left:1634px;top:1045.2px;font-size:24px;line-height:33.599999999999994px;color:#2a2e33;font-weight:normal;width:276px;text-align:center;letter-spacing:0.8px;">105.72%</div>
<div class="t " style="left:1912px;top:1045.2px;font-size:24px;line-height:33.599999999999994px;color:#2a2e33;font-weight:normal;width:158px;text-align:center;letter-spacing:0.8px;">84504</div>
<div class="t " style="left:2072px;top:1045.2px;font-size:24px;line-height:33.599999999999994px;color:#2a2e33;font-weight:normal;width:276px;text-align:center;letter-spacing:0.8px;">212.20%</div>
<div class="r" style="left:830px;top:1115px;width:1516px;height:25px;background:#ffffff;"></div>
</body></html>
